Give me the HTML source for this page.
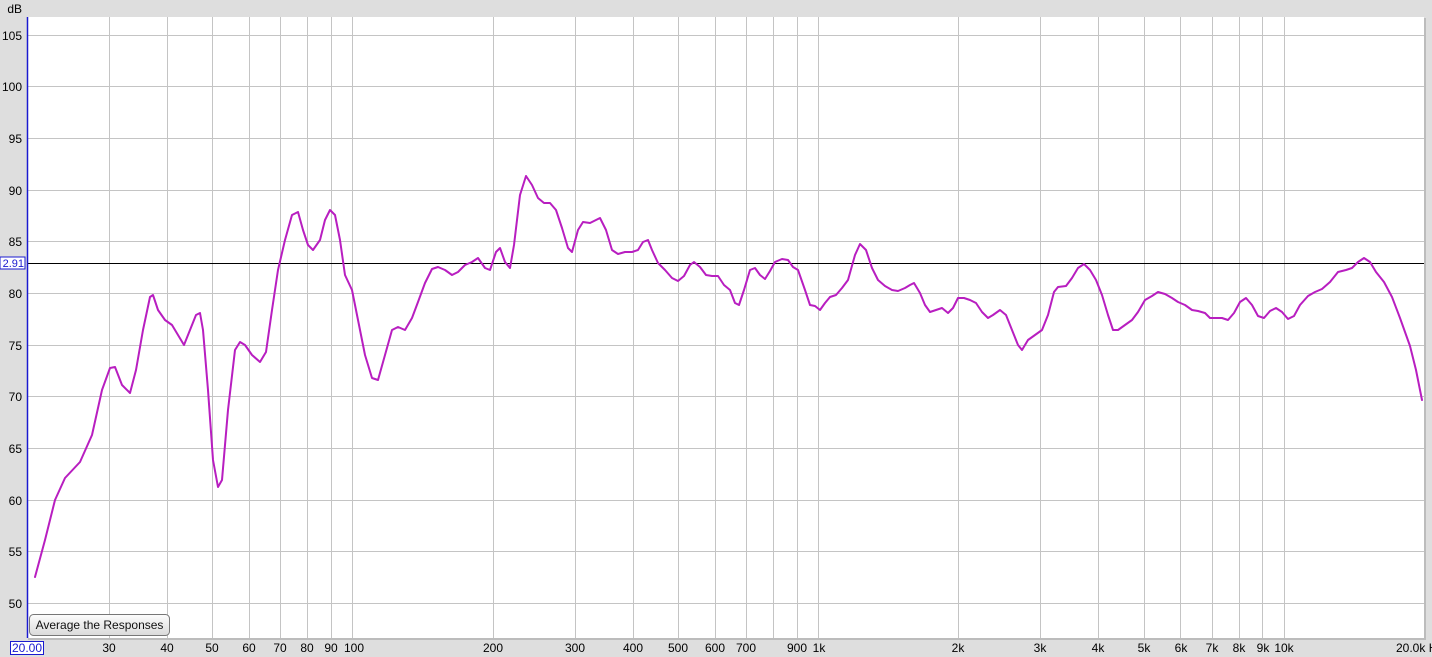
<!DOCTYPE html>
<html><head><meta charset="utf-8"><style>
html,body{margin:0;padding:0;background:#dedede;}
svg{display:block;font-family:"Liberation Sans",sans-serif;}
</style></head><body>
<svg width="1432" height="657" viewBox="0 0 1432 657" xmlns="http://www.w3.org/2000/svg">
<rect width="1432" height="657" fill="#dedede"/>
<rect x="28" y="18" width="1398" height="622" fill="#9a9a9a" opacity="0.5"/>
<rect x="27" y="17" width="1397" height="621" fill="#fff"/>
<g stroke="#c4c4c4" stroke-width="1">
<line x1="27" y1="35.5" x2="1424" y2="35.5"/><line x1="27" y1="86.5" x2="1424" y2="86.5"/><line x1="27" y1="138.5" x2="1424" y2="138.5"/><line x1="27" y1="190.5" x2="1424" y2="190.5"/><line x1="27" y1="241.5" x2="1424" y2="241.5"/><line x1="27" y1="293.5" x2="1424" y2="293.5"/><line x1="27" y1="345.5" x2="1424" y2="345.5"/><line x1="27" y1="396.5" x2="1424" y2="396.5"/><line x1="27" y1="448.5" x2="1424" y2="448.5"/><line x1="27" y1="500.5" x2="1424" y2="500.5"/><line x1="27" y1="551.5" x2="1424" y2="551.5"/><line x1="27" y1="603.5" x2="1424" y2="603.5"/>
<line x1="109.5" y1="17" x2="109.5" y2="638"/><line x1="167.5" y1="17" x2="167.5" y2="638"/><line x1="212.5" y1="17" x2="212.5" y2="638"/><line x1="249.5" y1="17" x2="249.5" y2="638"/><line x1="280.5" y1="17" x2="280.5" y2="638"/><line x1="307.5" y1="17" x2="307.5" y2="638"/><line x1="331.5" y1="17" x2="331.5" y2="638"/><line x1="352.5" y1="17" x2="352.5" y2="638"/><line x1="493.5" y1="17" x2="493.5" y2="638"/><line x1="575.5" y1="17" x2="575.5" y2="638"/><line x1="633.5" y1="17" x2="633.5" y2="638"/><line x1="678.5" y1="17" x2="678.5" y2="638"/><line x1="715.5" y1="17" x2="715.5" y2="638"/><line x1="746.5" y1="17" x2="746.5" y2="638"/><line x1="773.5" y1="17" x2="773.5" y2="638"/><line x1="797.5" y1="17" x2="797.5" y2="638"/><line x1="818.5" y1="17" x2="818.5" y2="638"/><line x1="958.5" y1="17" x2="958.5" y2="638"/><line x1="1040.5" y1="17" x2="1040.5" y2="638"/><line x1="1098.5" y1="17" x2="1098.5" y2="638"/><line x1="1144.5" y1="17" x2="1144.5" y2="638"/><line x1="1180.5" y1="17" x2="1180.5" y2="638"/><line x1="1212.5" y1="17" x2="1212.5" y2="638"/><line x1="1239.5" y1="17" x2="1239.5" y2="638"/><line x1="1262.5" y1="17" x2="1262.5" y2="638"/><line x1="1284.5" y1="17" x2="1284.5" y2="638"/>
</g>
<line x1="27" y1="263.5" x2="1424" y2="263.5" stroke="#000" stroke-width="1"/>
<line x1="27.5" y1="17" x2="27.5" y2="638" stroke="#1a1ad0" stroke-width="1.5"/>
<polyline fill="none" stroke="#b81ec0" stroke-width="2" stroke-linejoin="round" stroke-linecap="round" points="35,577 45,540 55,500 65,478 80,462 92,435 102,390 110,368 115,367 122,385 130,393 136,370 143,330 150,297 153,295 158,310 165,320 172,325 178,335 184,345 190,330 196,315 200,313 203,330 208,390 213,460 218,487 222,480 228,410 235,350 240,342 245,345 252,355 260,362 266,352 272,310 278,270 285,240 292,215 298,212 303,230 308,245 313,250 320,240 325,220 330,210 335,215 340,240 345,275 352,290 358,320 365,355 372,378 378,380 385,355 392,330 398,327 405,330 412,318 418,302 425,283 432,269 438,267 445,270 452,275 458,272 465,265 472,262 478,258 485,268 490,270 496,252 500,248 505,262 510,268 514,245 520,195 526,176 532,185 538,198 544,203 550,203 556,210 562,228 568,248 572,252 578,230 583,222 590,223 596,220 600,218 606,230 612,250 618,254 625,252 632,252 638,250 643,242 648,240 652,250 658,263 665,270 672,278 678,281 684,276 690,265 694,262 700,267 706,275 712,276 718,276 724,285 730,290 735,303 739,305 744,290 750,270 755,268 760,275 765,279 770,271 775,262 782,259 788,260 793,267 798,270 805,290 810,305 815,306 820,310 825,303 830,297 836,295 842,288 848,280 855,255 860,244 866,250 872,268 878,280 885,286 892,290 898,291 905,288 910,285 914,283 920,293 925,305 930,312 936,310 942,308 948,313 953,308 958,298 964,298 970,300 976,303 982,312 988,318 993,315 1000,310 1006,315 1012,330 1018,345 1022,350 1028,340 1035,335 1042,330 1048,315 1054,292 1058,287 1066,286 1072,278 1078,268 1084,264 1090,270 1096,280 1102,295 1108,315 1113,330 1118,330 1125,325 1132,320 1138,312 1145,300 1152,296 1158,292 1165,294 1172,298 1178,302 1185,305 1192,310 1198,311 1205,313 1210,318 1216,318 1222,318 1228,320 1234,313 1240,302 1246,298 1252,305 1258,316 1264,318 1270,311 1276,308 1282,312 1288,319 1294,316 1300,305 1308,296 1315,292 1322,289 1330,282 1338,272 1346,270 1352,268 1358,262 1364,258 1370,262 1376,272 1384,282 1392,297 1400,318 1410,346 1416,370 1422,400"/>
<g font-size="12" fill="#000" text-anchor="end">
<text x="22" y="13">dB</text>
<text x="22" y="40">105</text><text x="22" y="91">100</text><text x="22" y="143">95</text><text x="22" y="195">90</text><text x="22" y="246">85</text><text x="22" y="298">80</text><text x="22" y="350">75</text><text x="22" y="401">70</text><text x="22" y="453">65</text><text x="22" y="505">60</text><text x="22" y="556">55</text><text x="22" y="608">50</text>
</g>
<rect x="0" y="257" width="25" height="12" fill="#fff" stroke="#1a1ad0" stroke-width="1"/>
<text x="24" y="267" font-size="11" fill="#1a1ad0" text-anchor="end">2.91</text>
<g font-size="12" fill="#000" text-anchor="middle">
<text x="109" y="652">30</text><text x="167" y="652">40</text><text x="212" y="652">50</text><text x="249" y="652">60</text><text x="280" y="652">70</text><text x="307" y="652">80</text><text x="331" y="652">90</text><text x="354" y="652">100</text><text x="493" y="652">200</text><text x="575" y="652">300</text><text x="633" y="652">400</text><text x="678" y="652">500</text><text x="715" y="652">600</text><text x="746" y="652">700</text><text x="797" y="652">900</text><text x="819" y="652">1k</text><text x="958" y="652">2k</text><text x="1040" y="652">3k</text><text x="1098" y="652">4k</text><text x="1144" y="652">5k</text><text x="1181" y="652">6k</text><text x="1212" y="652">7k</text><text x="1239" y="652">8k</text><text x="1263" y="652">9k</text><text x="1284" y="652">10k</text>
<text x="1396" y="652" text-anchor="start">20.0k Hz</text>
</g>
<rect x="10.5" y="641.5" width="33" height="13" fill="#fff" stroke="#1a1ad0" stroke-width="1"/>
<text x="27" y="652" font-size="12" fill="#1a1ad0" text-anchor="middle">20.00</text>
<defs><linearGradient id="bg" x1="0" y1="0" x2="0" y2="1"><stop offset="0" stop-color="#fdfdfd"/><stop offset="1" stop-color="#dadada"/></linearGradient></defs>
<rect x="29.5" y="614.5" width="140" height="21" rx="4" fill="url(#bg)" stroke="#777"/>
<text x="99.5" y="629" font-size="12" fill="#111" text-anchor="middle">Average the Responses</text>
</svg>
</body></html>
